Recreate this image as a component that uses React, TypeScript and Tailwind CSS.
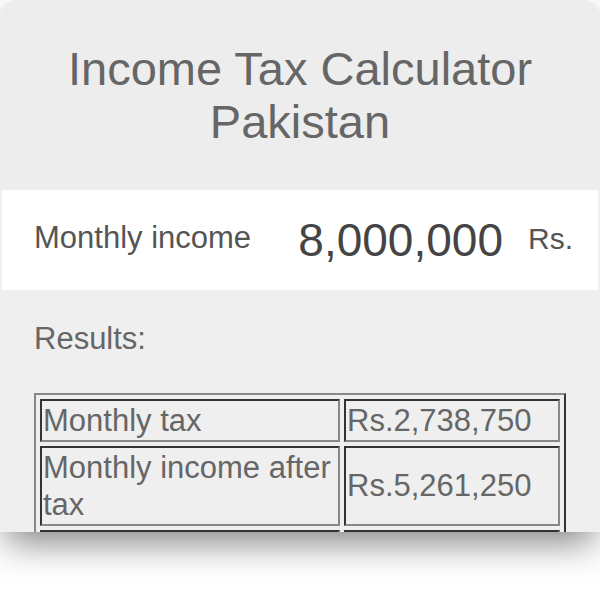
const rows = [
  { label: "Monthly tax", value: "Rs.2,738,750" },
  { label: "Monthly income after tax", value: "Rs.5,261,250" },
  { label: "Yearly tax", value: "Rs.32,865,000" },
];

const App = () => {
  return (
    <div className="w-[600px] h-[600px] bg-white overflow-hidden font-['Liberation_Sans',Arial,sans-serif]">
      <div className="h-[532px] overflow-hidden rounded-t-[16px] bg-[#efefef] shadow-[0_16px_36px_-6px_rgba(0,0,0,0.5)]">
        {/* Header */}
        <div className="bg-[#ededed] pt-[42px] pb-[42px] text-center">
          <h1 className="text-[47px] leading-[53px] text-[#666]">
            Income Tax Calculator
            <br />
            Pakistan
          </h1>
        </div>

        {/* Input row */}
        <div className="mx-[2px] flex h-[100px] items-center justify-between bg-white pl-[32px] pr-[25px]">
          <span className="mt-[-3px] text-[31px] text-[#555]">Monthly income</span>
          <div className="flex items-center">
            <span className="text-[46px] text-[#444]">8,000,000</span>
            <span className="ml-[25px] mt-[-3px] text-[30px] text-[#555]">Rs.</span>
          </div>
        </div>

        {/* Results */}
        <div className="px-[34px] pt-[26px]">
          <p className="text-[31px] text-[#666]">Results:</p>
          <table className="mt-[30px] w-[532px] table-fixed border-separate border-spacing-[4px] border-2 border-t-[#888] border-l-[#888] border-r-[#333] border-b-[#333] text-[31px] leading-[37px] text-[#666]">
            <colgroup>
              <col className="w-[300px]" />
              <col className="w-[216px]" />
            </colgroup>
            <tbody>
              {rows.map((r) => (
                <tr key={r.label}>
                  <td className="border-2 border-t-[#333] border-l-[#333] border-r-[#888] border-b-[#888] p-[1px] align-middle">
                    {r.label}
                  </td>
                  <td className="border-2 border-t-[#333] border-l-[#333] border-r-[#888] border-b-[#888] p-[1px] align-middle">
                    {r.value}
                  </td>
                </tr>
              ))}
            </tbody>
          </table>
        </div>
      </div>
    </div>
  );
};

export default App;
